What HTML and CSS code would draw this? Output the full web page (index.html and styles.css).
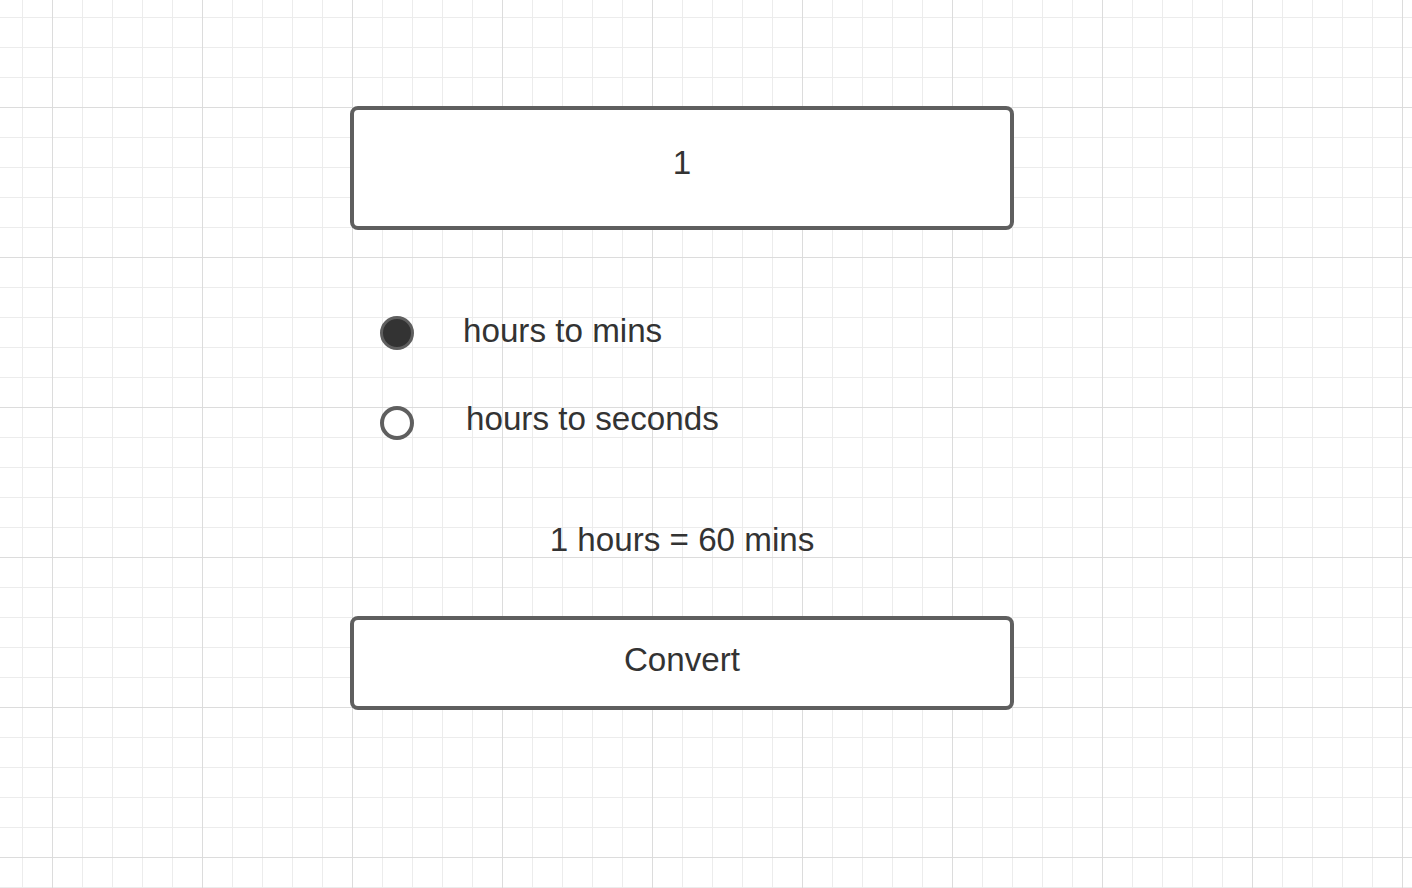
FILE: index.html
```html
<!DOCTYPE html>
<html>
<head>
<meta charset="utf-8">
<title>Time converter</title>
<link rel="stylesheet" href="styles.css">
</head>
<body>
<div class="app">
  <div class="value-box">1</div>
  <div class="options">
    <div class="option option-first">
      <span class="radio radio-checked"></span>
      <span class="option-label">hours to mins</span>
    </div>
    <div class="option option-second">
      <span class="radio"></span>
      <span class="option-label label-second">hours to seconds</span>
    </div>
  </div>
  <div class="result">1 hours = 60 mins</div>
  <div class="convert-btn">Convert</div>
</div>
</body>
</html>
```
FILE: styles.css
```css
html, body {
  margin: 0;
  padding: 0;
}
body {
  width: 1412px;
  height: 888px;
  overflow: hidden;
  background-color: #ffffff;
  background-image:
    linear-gradient(to right, #dcdcdc 1px, transparent 1px),
    linear-gradient(to bottom, #dcdcdc 1px, transparent 1px),
    linear-gradient(to right, #ececec 1px, transparent 1px),
    linear-gradient(to bottom, #ececec 1px, transparent 1px);
  background-size: 150px 150px, 150px 150px, 30px 30px, 30px 30px;
  background-position: 52px 0, 0 107px, 22px 0, 0 17px;
  font-family: "Liberation Sans", Arial, sans-serif;
  font-size: 33.2px;
  line-height: 38px;
  color: #333333;
}
.app {
  margin-left: 350px;
  width: 664px;
  padding-top: 106px;
}
.value-box {
  box-sizing: border-box;
  height: 124px;
  border: 4px solid #5f5f5f;
  border-radius: 8px;
  background: #ffffff;
  text-align: center;
  padding-top: 34px;
}
.options {
  display: flex;
  flex-direction: column;
  gap: 50px;
  margin-top: 82px;
}
.option {
  display: flex;
  align-items: flex-start;
  height: 38px;
}
.radio {
  box-sizing: border-box;
  flex: none;
  width: 34px;
  height: 34px;
  border-radius: 50%;
  border: 4px solid #5f5f5f;
  background: #ffffff;
  margin-left: 30px;
  margin-top: 4px;
}
.option-second .radio {
  margin-top: 6px;
}
.radio-checked {
  background: #333333;
  border-width: 3px;
}
.option-label {
  margin-left: 49px;
}
.label-second {
  margin-left: 52px;
}
.result {
  margin-top: 83px;
  text-align: center;
}
.convert-btn {
  box-sizing: border-box;
  height: 94px;
  margin-top: 57px;
  border: 4px solid #5f5f5f;
  border-radius: 8px;
  background: #ffffff;
  text-align: center;
  padding-top: 21px;
}
```
